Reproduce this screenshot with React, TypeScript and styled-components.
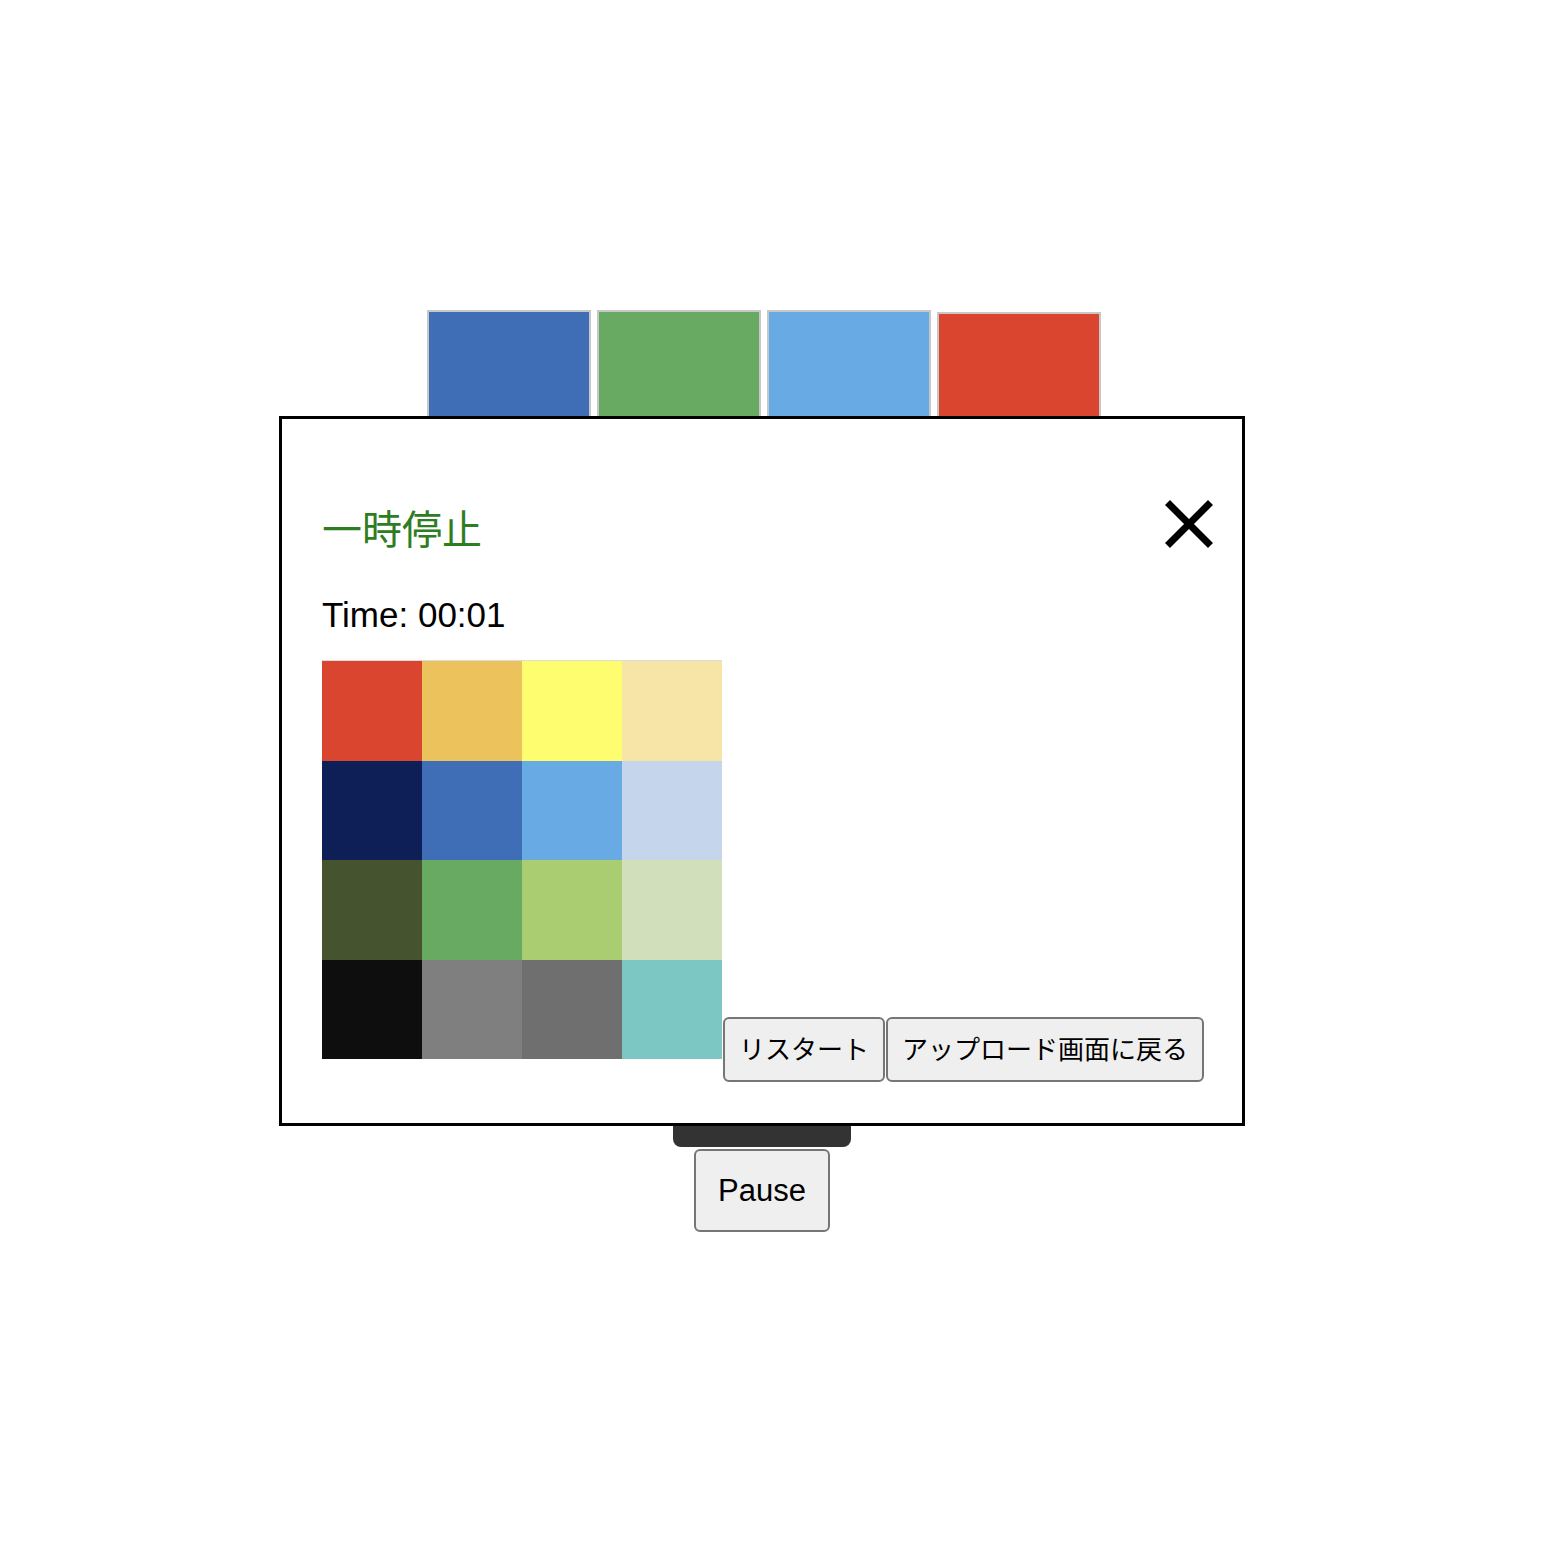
import styled, { createGlobalStyle } from 'styled-components';
import * as React from 'react';

const GlobalStyle = createGlobalStyle`
  body {
    margin: 0;
    background: #fff;
    font-family: 'Liberation Sans', 'Noto Sans CJK JP', sans-serif;
  }
`;

export const Page = styled.div`
  position: relative;
  width: 1524px;
  min-height: 1550px;
  padding-top: 310px;
  box-sizing: border-box;
  display: flex;
  flex-direction: column;
  align-items: center;
`;

export const SwatchRow = styled.div`
  display: flex;
  align-items: flex-start;
  gap: 6px;
  height: 166px;
  margin-left: 4px;
`;

export const Swatch = styled.div<{ $color: string; $selected?: boolean }>`
  width: 160px;
  height: 160px;
  border: 2px solid #c8c8c8;
  background: ${(p) => p.$color};
  margin-top: ${(p) => (p.$selected ? '2px' : '0')};
`;

export const Board = styled.div`
  width: 178px;
  height: 671px;
  background: #333;
  border-radius: 0 0 8px 8px;
`;

export const PauseButton = styled.button`
  margin-top: 2px;
  height: 83px;
  padding: 0 22px;
  font-family: 'Liberation Sans', sans-serif;
  font-size: 31px;
  color: #000;
  background: #efefef;
  border: 2px solid #767676;
  border-radius: 6px;
`;

export const Modal = styled.div`
  position: absolute;
  top: 416px;
  left: 50%;
  transform: translateX(-50%);
  width: 966px;
  box-sizing: border-box;
  padding: 40px 40px 41px;
  border: 3px solid #000;
  background: #fff;
`;

export const ModalHeader = styled.div`
  display: flex;
  justify-content: space-between;
  align-items: flex-start;
  margin-top: 41px;
`;

export const ModalTitle = styled.h2`
  margin: 3px 0 0;
  font-family: 'Noto Sans CJK JP', sans-serif;
  font-size: 40px;
  line-height: 48px;
  font-weight: 400;
  color: #2e7d22;
`;

export const CloseButton = styled.button`
  width: 48px;
  height: 48px;
  margin-right: -11px;
  padding: 0;
  border: none;
  background: none;
  cursor: pointer;
  svg {
    display: block;
  }
`;

export const TimeText = styled.div`
  margin-top: 44px;
  font-size: 35px;
  line-height: 40px;
  color: #000;
`;

export const BottomRow = styled.div`
  display: flex;
  align-items: flex-end;
  margin-top: 26px;
`;

export const Palette = styled.div`
  flex-shrink: 0;
  display: grid;
  grid-template-columns: repeat(4, 100px);
  grid-template-rows: repeat(4, 99.5px);
  margin-bottom: 23px;
  box-shadow: 0 -1px 0 #dcdcdc;
`;

export const Cell = styled.div<{ $color: string }>`
  background: ${(p) => p.$color};
`;

export const Actions = styled.div`
  display: flex;
  gap: 1px;
  margin-left: 1px;
  flex-shrink: 0;
`;

export const ActionButton = styled.button`
  height: 65px;
  padding: 0 14px 5px;
  white-space: nowrap;
  font-family: 'Noto Sans CJK JP', sans-serif;
  font-size: 26px;
  color: #000;
  background: #efefef;
  border: 2px solid #767676;
  border-radius: 6px;
`;

const swatches = ['#3f6eb7', '#69aa63', '#67aae4', '#d9452f'];

const palette = [
  '#d9452f', '#ecc25c', '#fdfd6f', '#f7e5a8',
  '#0e1f57', '#3f6eb7', '#67aae4', '#c5d5eb',
  '#45542f', '#69aa63', '#abcd71', '#d1dfba',
  '#0e0e0e', '#7f7f7f', '#6e6f6e', '#7cc6c4',
];

export default function App() {
  return (
    <>
      <GlobalStyle />
      <Page>
        <SwatchRow>
          {swatches.map((c, i) => (
            <Swatch key={i} $color={c} $selected={i === 3} />
          ))}
        </SwatchRow>
        <Board />
        <PauseButton>Pause</PauseButton>

        <Modal>
          <ModalHeader>
            <ModalTitle>一時停止</ModalTitle>
            <CloseButton aria-label="close">
              <svg width="48" height="48" viewBox="0 0 48 48">
                <line x1="2.5" y1="2.5" x2="45.5" y2="45.5" stroke="#000" strokeWidth="7" />
                <line x1="45.5" y1="2.5" x2="2.5" y2="45.5" stroke="#000" strokeWidth="7" />
              </svg>
            </CloseButton>
          </ModalHeader>
          <TimeText>Time: 00:01</TimeText>
          <BottomRow>
            <Palette>
              {palette.map((c, i) => (
                <Cell key={i} $color={c} />
              ))}
            </Palette>
            <Actions>
              <ActionButton>リスタート</ActionButton>
              <ActionButton>アップロード画面に戻る</ActionButton>
            </Actions>
          </BottomRow>
        </Modal>
      </Page>
    </>
  );
}
